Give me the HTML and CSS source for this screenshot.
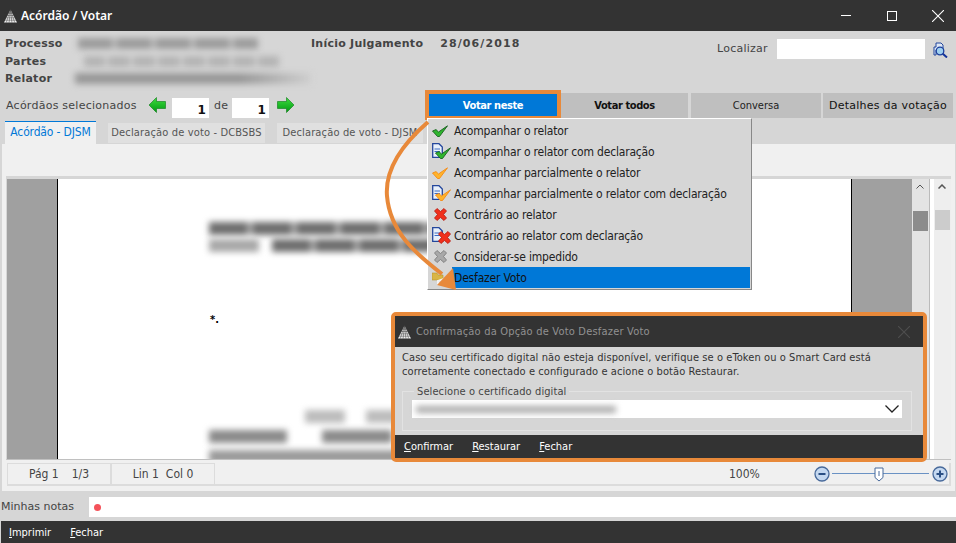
FILE: index.html
```html
<!DOCTYPE html>
<html lang="pt-BR">
<head>
	<meta charset="UTF-8">
	<title>Acórdão / Votar</title>
	<link rel="stylesheet" href="styles.css">
</head>
<body>

<!-- icones reutilizados -->
<svg class="defs" width="0" height="0">
	<defs>
		<linearGradient id="gradGreen" x1="0" y1="0" x2="0" y2="1">
			<stop offset="0" stop-color="#3fdc3f"/>
			<stop offset="1" stop-color="#009a12"/>
		</linearGradient>
	</defs>
	<symbol id="logo" viewBox="0 0 14 14">
		<polygon points="7,0 14,14 0,14" fill="#f2f2f2"/>
		<path d="M0 11.5H14M0 9H14M0 6.500H14M0 4H14M2.500 14L7 0M5.500 14L7 0M8.500 14L7 0M11.500 14L7 0" stroke="#333" stroke-width=".5" fill="none"/>
	</symbol>
	<symbol id="checkGreen" viewBox="0 0 16 12">
		<path d="M.5 6L4 4.600L6.500 7L15.500 .8L7.500 11.500H5.500Z" fill="#2fb52f" stroke="#17601f" stroke-width=".9"/>
	</symbol>
	<symbol id="checkOrange" viewBox="0 0 16 12">
		<path d="M.5 6L4 4.600L6.500 7L15.500 .8L7.500 11.500H5.500Z" fill="#ffb42b" stroke="#f58a14" stroke-width=".9"/>
	</symbol>
	<symbol id="crossRed" viewBox="0 0 13 13">
		<path d="M.5 3L3 .5L6.500 3.500L10 .5L12.500 3L9.500 6.500L12.500 10L10 12.500L6.500 9.500L3 12.500L.5 10L3.500 6.500Z" fill="#f0301c" stroke="#b51a10" stroke-width=".8"/>
	</symbol>
	<symbol id="crossGrey" viewBox="0 0 13 13">
		<path d="M.5 3L3 .5L6.500 3.500L10 .5L12.500 3L9.500 6.500L12.500 10L10 12.500L6.500 9.500L3 12.500L.5 10L3.500 6.500Z" fill="#a8a8a8" stroke="#777" stroke-width=".8"/>
	</symbol>
	<symbol id="sheet" viewBox="0 0 11 15">
		<path d="M.7.7H7L10.300 4V14.300H.7Z" fill="#e8f0fa" stroke="#23479c" stroke-width="1.300"/>
		<path d="M2.500 6H8M2.500 8.500H8" stroke="#3c6cc4"/>
	</symbol>
</svg>

<div class="titleBar">
	<svg class="logoIcon"><use href="#logo"/></svg>
	<span class="titleText">Acórdão / Votar</span>
	<div class="winBtns">
		<span class="winMin"></span>
		<span class="winMax"></span>
		<svg class="winClose" viewBox="0 0 12 12"><path d="M0 0L12 12M12 0L0 12" stroke="#fff" stroke-width="1.100"/></svg>
	</div>
</div>

<div class="infoBox">
	<div class="infoLeft">
		<div class="infoRow"><b class="infoLabel">Processo</b><span class="blurBar barA"></span></div>
		<div class="infoRow"><b class="infoLabel">Partes</b><span class="blurBar barB"></span></div>
		<div class="infoRow"><b class="infoLabel">Relator</b><span class="blurBar barC"></span></div>
	</div>
	<div class="infoDate">
		<b class="dateLabel">Início Julgamento</b><b class="dateValue">28/06/2018</b>
	</div>
	<div class="findBox">
		<span class="findLabel">Localizar</span>
		<span class="findInput"></span>
		<svg class="findIcon" viewBox="0 0 15 16">
			<path d="M1 5L3 5V1H8L10 3V8H3V13H1Z" fill="#dfe8f6" stroke="#23479c"/>
			<circle cx="7" cy="9" r="3.800" fill="#9fd0f0" stroke="#1b3f9c" stroke-width="1.300"/>
			<path d="M9.800 11.800L14 15.500" stroke="#14339a" stroke-width="2"/>
		</svg>
	</div>
</div>

<div class="selectRow">
	<span class="selLabel">Acórdãos selecionados</span>
	<svg class="navArrow arrowLeft" viewBox="0 0 17 16"><path d="M0 8L7.500 .5V4.500H16.500V11.500H7.500V15.500Z" fill="url(#gradGreen)" stroke="#0a7a16" stroke-width=".6"/></svg>
	<span class="numBox">1</span>
	<span class="ofText">de</span>
	<span class="numBox numLast">1</span>
	<svg class="navArrow arrowRight" viewBox="0 0 17 16"><path d="M17 8L9.500 .5V4.500H.5V11.500H9.500V15.500Z" fill="url(#gradGreen)" stroke="#0a7a16" stroke-width=".6"/></svg>
	<div class="actions">
		<button class="actBtn actVote">Votar neste</button>
		<button class="actBtn actAll">Votar todos</button>
		<button class="actBtn actTalk">Conversa</button>
		<button class="actBtn actInfo">Detalhes da votação</button>
	</div>
</div>

<div class="tabs">
	<span class="tab tabOn">Acórdão - DJSM</span>
	<span class="tab tabTwo">Declaração de voto - DCBSBS</span>
	<span class="tab tabThree">Declaração de voto - DJSM</span>
</div>

<div class="panel">
	<div class="docView">
		<div class="pageSide"></div>
		<div class="page">
			<span class="pageBlur blurA"></span>
			<span class="pageBlur blurB"></span>
			<span class="pageBlur blurC"></span>
			<span class="pageBlur blurD"></span>
			<span class="pageBlur blurE"></span>
			<span class="pageBlur blurF"></span>
			<span class="pageBlur blurG"></span>
			<span class="pageBlur blurH"></span>
			<b class="pageMark">*.</b>
		</div>
		<div class="pageSide pageSideR"></div>
		<div class="scroll scrollOne">
			<svg class="scrollUp" viewBox="0 0 8 5"><path d="M.5 4.500L4 1L7.500 4.500" fill="none" stroke="#555"/></svg>
			<span class="thumb thumbOne"></span>
			<svg class="scrollDown" viewBox="0 0 8 5"><path d="M.5 .5L4 4L7.500 .5" fill="none" stroke="#555" stroke-width="1.500"/></svg>
		</div>
		<div class="scroll scrollTwo">
			<svg class="scrollUp" viewBox="0 0 8 5"><path d="M.5 4.500L4 1L7.500 4.500" fill="none" stroke="#555" stroke-width="1.500"/></svg>
			<span class="thumb thumbTwo"></span>
		</div>
	</div>
	<div class="statusRow">
		<span class="statCell"><span>Pág 1</span><span>1/3</span></span>
		<span class="statCell"><span>Lin 1</span><span>Col 0</span></span>
		<span class="statZoom">100%</span>
		<div class="zoomBar">
			<svg class="zoomBtn" viewBox="0 0 16 16"><circle cx="8" cy="8" r="7" fill="#c4d8f0" stroke="#47699a" stroke-width="1.300"/><path d="M4.500 8H11.500" stroke="#2a4f84" stroke-width="2"/></svg>
			<span class="zoomLine"><svg class="zoomThumb" viewBox="0 0 10 15"><path d="M1 1H9V10.500L5 14L1 10.500Z" fill="#fff" stroke="#47699a"/><path d="M5 4V9" stroke="#47699a"/></svg></span>
			<svg class="zoomBtn" viewBox="0 0 16 16"><circle cx="8" cy="8" r="7" fill="#c4d8f0" stroke="#47699a" stroke-width="1.300"/><path d="M4.500 8H11.500M8 4.500V11.500" stroke="#2a4f84" stroke-width="2"/></svg>
		</div>
	</div>
</div>

<div class="notesRow">
	<span class="notesLabel">Minhas notas</span>
	<div class="notesInput"><span class="redDot"></span></div>
</div>

<div class="bottomBar">
	<span class="barBtn"><u>I</u>mprimir</span>
	<span class="barBtn"><u>F</u>echar</span>
</div>

<!-- menu do botao Votar neste -->
<div class="voteMenu">
	<div class="menuItem"><span class="menuIcon"><svg class="icCheck"><use href="#checkGreen"/></svg></span>Acompanhar o relator</div>
	<div class="menuItem"><span class="menuIcon"><svg class="icSheet"><use href="#sheet"/></svg><svg class="icCheck icOver"><use href="#checkGreen"/></svg></span>Acompanhar o relator com declaração</div>
	<div class="menuItem"><span class="menuIcon"><svg class="icCheck"><use href="#checkOrange"/></svg></span>Acompanhar parcialmente o relator</div>
	<div class="menuItem"><span class="menuIcon"><svg class="icSheet"><use href="#sheet"/></svg><svg class="icCheck icOver"><use href="#checkOrange"/></svg></span>Acompanhar parcialmente o relator com declaração</div>
	<div class="menuItem"><span class="menuIcon"><svg class="icCross"><use href="#crossRed"/></svg></span>Contrário ao relator</div>
	<div class="menuItem"><span class="menuIcon"><svg class="icSheet"><use href="#sheet"/></svg><svg class="icCross icOver"><use href="#crossRed"/></svg></span>Contrário ao relator com declaração</div>
	<div class="menuItem"><span class="menuIcon"><svg class="icCross"><use href="#crossGrey"/></svg></span>Considerar-se impedido</div>
	<div class="menuItem menuOn"><span class="menuIcon"><svg class="icUndo" viewBox="0 0 14 14"><path d="M0 2H5L6 4H11V9H0Z" fill="#d9b545" stroke="#b8952c" stroke-width=".6"/><path d="M6 14V10L12 8" stroke="#f3f3f3" stroke-width="2" fill="none"/></svg></span><span class="menuText">Desfazer Voto</span></div>
</div>

<!-- dialogo de confirmacao -->
<div class="dialog">
	<div class="dlgTitle">
		<svg class="logoIcon dlgLogo"><use href="#logo"/></svg>
		<span class="dlgName">Confirmação da Opção de Voto Desfazer Voto</span>
		<svg class="dlgClose" viewBox="0 0 12 12"><path d="M0 0L12 12M12 0L0 12" stroke="#4e4e4e" stroke-width="1.100"/></svg>
	</div>
	<div class="dlgBody">
		<p class="dlgText">Caso seu certificado digital não esteja disponível, verifique se o eToken ou o Smart Card está corretamente conectado e configurado e acione o botão Restaurar.</p>
		<fieldset class="dlgGroup">
			<legend class="dlgLegend">Selecione o certificado digital</legend>
			<div class="dlgSelect">
				<span class="blurBar barCert"></span>
				<svg class="dlgChevron" viewBox="0 0 14 8"><path d="M.5 .5L7 7L13.500 .5" fill="none" stroke="#222" stroke-width="1.300"/></svg>
			</div>
		</fieldset>
	</div>
	<div class="dlgBar">
		<span class="barBtn"><u>C</u>onfirmar</span>
		<span class="barBtn"><u>R</u>estaurar</span>
		<span class="barBtn"><u>F</u>echar</span>
	</div>
</div>

<!-- seta laranja por cima de tudo -->
<svg class="callout" viewBox="0 0 956 543">
	<path d="M428 122C398 148 385 172 387 196C390 232 416 254 442 274" fill="none" stroke="#e8893a" stroke-width="4"/>
	<polygon points="453,268 437,285 456,290" fill="#e8893a"/>
</svg>

</body>
</html>
```

FILE: styles.css
```css
*{
	margin: 0;
	padding: 0;
	box-sizing: border-box;
}

body{
	width: 956px;
	height: 543px;
	overflow: hidden;
	position: relative;
	background: #d6d6d6;
	font-family: "DejaVu Sans", sans-serif;
	font-stretch: condensed;
	font-size: 12px;
	color: #444;
}

.defs{
	position: absolute;
}

/* barra de titulo */
.titleBar{
	height: 31px;
	background: #333;
	color: #fff;
	display: flex;
	align-items: center;
	padding-left: 4px;
}

.logoIcon{
	width: 13px;
	height: 14px;
}

.titleText{
	margin-left: 4px;
	font-family: "Noto Sans", sans-serif;
	font-stretch: normal;
	font-size: 12px;
	font-weight: 600;
}

.winBtns{
	margin-left: auto;
	display: flex;
	align-items: center;
	padding-right: 12px;
}

.winMin{
	width: 10px;
	height: 1px;
	background: #fff;
}

.winMax{
	width: 10px;
	height: 10px;
	border: 1px solid #fff;
	margin-left: 36px;
}

.winClose{
	width: 12px;
	height: 12px;
	margin-left: 35px;
}

/* dados do processo */
.infoBox{
	height: 59px;
	display: flex;
	position: relative;
	font-stretch: normal;
	font-size: 11px;
	letter-spacing: .25px;
}

.infoLeft{
	width: 311px;
	padding: 4px 0 0 5px;
}

.infoRow{
	height: 17.500px;
	display: flex;
	align-items: center;
}

.infoLabel{
	width: 71px;
}

.blurBar{
	display: block;
	height: 11px;
	background: repeating-linear-gradient(90deg, #9c9c9c 0 34px, #bcbcbc 34px 39px);
	filter: blur(3px);
}

.barA{
	width: 180px;
	margin-left: 2px;
}

.barB{
	width: 195px;
	margin-left: 8px;
	background: repeating-linear-gradient(90deg, #b4b4b4 0 20px, #c8c8c8 20px 25px);
}

.barC{
	width: 250px;
	margin-left: 3px;
	background: linear-gradient(to right, #989898 70%, #cfcfcf);
}

.infoDate{
	width: 406px;
	padding-top: 6px;
}

.dateLabel{
	margin-right: 17px;
}

.dateValue{
	letter-spacing: 1.100px;
}

.findBox{
	display: flex;
	align-items: flex-start;
	padding-top: 8px;
}

.findLabel{
	width: 60px;
	padding-top: 3px;
}

.findInput{
	width: 148px;
	height: 20px;
	background: #fff;
}

.findIcon{
	width: 15px;
	height: 16px;
	margin: 3px 0 0 8px;
}

/* linha de selecao e botoes */
.selectRow{
	height: 30px;
	display: flex;
	align-items: center;
	position: relative;
	font-stretch: normal;
	font-size: 11px;
	letter-spacing: .25px;
	padding-left: 6px;
}

.selLabel{
	width: 143px;
}

.navArrow{
	width: 17px;
	height: 16px;
}

.numBox{
	width: 37px;
	height: 26px;
	border-top: 6px solid #d6d6d6;
	background: #fff;
	margin-left: 6px;
	text-align: right;
	padding: 5px 3px 0 0;
	font-size: 12px;
	font-weight: bold;
	color: #111;
}

.ofText{
	width: 18px;
	margin-left: 5px;
}

.numLast{
	margin-left: 0;
}

.arrowRight{
	margin-left: 8px;
}

.actions{
	margin-left: auto;
	margin-right: 3px;
	display: flex;
	height: 30px;
	align-items: center;
}

.actBtn{
	height: 25px;
	background: #bfbfbf;
	border: 0;
	color: #222;
	font-family: "DejaVu Sans", sans-serif;
	font-stretch: condensed;
	font-size: 11px;
}

.actVote{
	width: 128px;
	height: 22px;
	background: #0078d7;
	color: #fff;
	font-weight: 700;
	letter-spacing: -.4px;
	outline: 4px solid #e8893a;
	margin-right: 4px;
}

.actAll{
	width: 127px;
	font-weight: 700;
	letter-spacing: -.4px;
	color: #111;
}

.actTalk{
	width: 130px;
	margin-left: 3px;
}

.actInfo{
	width: 130px;
	margin-left: 2px;
	font-stretch: normal;
	letter-spacing: .25px;
	color: #111;
}

/* abas */
.tabs{
	height: 23px;
	margin-top: 1px;
	padding-left: 5px;
	display: flex;
	align-items: flex-end;
}

.tab{
	height: 20px;
	line-height: 19px;
	background: #e0e0e0;
	color: #555;
	font-size: 11px;
	letter-spacing: .15px;
	text-align: center;
	white-space: nowrap;
	margin-bottom: 1px;
}

.tabOn{
	width: 91px;
	height: 23px;
	line-height: 21px;
	margin-bottom: 0;
	background: #f0f0f0;
	border-top: 1px solid #0078d7;
	color: #0078d7;
	font-size: 12px;
	letter-spacing: -.15px;
}

.tabTwo{
	width: 157px;
	margin-left: 12px;
}

.tabThree{
	width: 146px;
	margin-left: 12px;
}

/* painel do documento */
.panel{
	height: 347px;
	width: 953px;
	margin-left: 2px;
	background: #f0f0f0;
	padding: 32px 4px 0;
}

.docView{
	height: 284px;
	border-top: 3px solid #d6d6d6;
	border-left: 1px solid #d6d6d6;
	border-bottom: 1px solid #c0c0c0;
	display: flex;
	background: #fff;
}

.pageSide{
	width: 50px;
	background: #a0a0a0;
}

.pageSideR{
	width: 60px;
}

.page{
	width: 796px;
	background: #fff;
	border-left: 1px solid #000;
	border-right: 1px solid #000;
	position: relative;
	overflow: hidden;
}

.pageBlur{
	position: absolute;
	height: 13px;
	background: repeating-linear-gradient(90deg, #6e6e6e 0 38px, #a8a8a8 38px 44px);
	filter: blur(3px);
}

.blurA{ left: 151px; top: 43px; width: 300px; }
.blurB{ left: 151px; top: 60px; width: 50px; background: #a8a8a8; }
.blurC{ left: 214px; top: 60px; width: 240px; }
.blurD{ left: 247px; top: 231px; width: 40px; background: #bcbcbc; }
.blurE{ left: 308px; top: 231px; width: 40px; background: #bcbcbc; }
.blurF{ left: 151px; top: 251px; width: 78px; background: #8a8a8a; }
.blurG{ left: 264px; top: 251px; width: 70px; background: #8a8a8a; }
.blurH{ left: 151px; top: 271px; width: 200px; background: #9a9a9a; }

.pageMark{
	position: absolute;
	left: 152px;
	top: 134px;
	color: #000;
	font-size: 11px;
	line-height: 14px;
}

.scroll{
	position: relative;
	background: #e4e4e4;
	width: 17px;
}

.scrollOne{
	border-right: 1px solid #bbb;
	width: 18px;
}

.scrollTwo{
	margin-left: 4px;
	background: #eee;
}

.scrollUp{
	position: absolute;
	top: 5px;
	left: 4px;
	width: 8px;
	height: 5px;
}

.scrollDown{
	position: absolute;
	bottom: 5px;
	left: 4px;
	width: 8px;
	height: 5px;
}

.thumb{
	position: absolute;
	top: 32px;
	left: 1px;
	width: 15px;
	height: 20px;
}

.thumbOne{
	background: #8c8c8c;
}

.thumbTwo{
	background: #ccc;
	top: 31px;
}

/* barra de status */
.statusRow{
	height: 23px;
	margin: 3px 0 0 1px;
	border: 2px solid #dcdcdc;
	border-left: 0;
	border-top: 0;
	display: flex;
	align-items: center;
	color: #444;
}

.statCell{
	width: 104px;
	height: 22px;
	border: 1px solid #dcdcdc;
	display: flex;
	justify-content: center;
	align-items: center;
	gap: 13px;
}

.statCell + .statCell{
	gap: 7px;
}

.statZoom{
	margin-left: 514px;
	width: 85px;
}

.zoomBar{
	display: flex;
	align-items: center;
}

.zoomBtn{
	width: 16px;
	height: 16px;
}

.zoomLine{
	width: 97px;
	height: 1px;
	background: #6a92c4;
	margin: 0 3px 0 2px;
	position: relative;
}

.zoomThumb{
	position: absolute;
	left: 42px;
	top: -6px;
	width: 10px;
	height: 15px;
}

/* notas */
.notesRow{
	height: 28px;
	display: flex;
	align-items: center;
	padding: 3px 0 0 1px;
}

.notesLabel{
	width: 88px;
	font-stretch: normal;
	font-size: 11px;
}

.notesInput{
	flex: 1;
	height: 20px;
	background: #fff;
	padding: 7px 0 0 5px;
}

.redDot{
	display: block;
	width: 7px;
	height: 7px;
	border-radius: 50%;
	background: #f4525a;
}

.bottomBar{
	height: 22px;
	margin: 2px 0 0 1px;
	background: #333;
	display: flex;
	align-items: center;
	padding-left: 8px;
	gap: 19px;
}

.barBtn{
	color: #fff;
	font-size: 11px;
}

/* menu */
.voteMenu{
	position: absolute;
	left: 427px;
	top: 118px;
	width: 325px;
	height: 172px;
	background: #d6d6d6;
	border-top: 1px solid #fff;
	border-left: 1px solid #fff;
	border-right: 1px solid #888;
	border-bottom: 1px solid #888;
	padding: 1px 1px 0 0;
	color: #222;
	letter-spacing: -.18px;
}

.menuItem{
	height: 21px;
	display: flex;
	align-items: center;
	padding: 1px 0 0 26px;
	position: relative;
}

.menuIcon{
	position: absolute;
	left: 4px;
	top: 2px;
	width: 18px;
	height: 17px;
}

.menuIcon svg{
	position: absolute;
	left: 0;
}

.icCheck{
	width: 16px;
	height: 12px;
	top: 3px;
}

.icCross{
	width: 13px;
	height: 13px;
	top: 2px;
	left: 2px !important;
}

.icSheet{
	width: 11px;
	height: 15px;
	top: 0;
}

.icOver{
	left: 3px !important;
	top: 4px;
}

.icCross.icOver{
	left: 6px !important;
}

.icUndo{
	width: 14px;
	height: 14px;
	top: 2px;
}

.menuText{
	margin: -1px 0 0 -2px;
	padding-left: 2px;
	flex: 1;
	background: #0078d7;
	height: 21px;
	line-height: 22px;
	color: #111;
}

/* dialogo */
.dialog{
	position: absolute;
	left: 391px;
	top: 312px;
	width: 536px;
	height: 150px;
	background: #d6d6d6;
	border: 4px solid #e8893a;
	border-radius: 5px;
	display: flex;
	flex-direction: column;
}

.dlgTitle{
	height: 31px;
	background: #333;
	display: flex;
	align-items: center;
	padding: 0 13px 0 3px;
	flex: none;
}

.dlgName{
	margin-left: 5px;
	color: #919191;
	font-size: 11px;
	letter-spacing: .2px;
}

.dlgClose{
	margin-left: auto;
	width: 12px;
	height: 12px;
}

.dlgBody{
	flex: 1;
	padding: 4px 11px 0 7px;
}

.dlgText{
	line-height: 14px;
	font-size: 11px;
	letter-spacing: .08px;
	color: #333;
}

.dlgGroup{
	height: 46px;
	margin-top: 6px;
	border: 1px solid #e2e2e2;
	padding: 0 9px;
}

.dlgLegend{
	margin-left: 2px;
	padding: 0 3px;
	line-height: 13px;
	font-size: 11px;
	letter-spacing: .1px;
	color: #444;
}

.dlgSelect{
	height: 18px;
	margin-top: 2px;
	background: #fff;
	display: flex;
	align-items: center;
	padding: 0 3px 0 4px;
}

.barCert{
	width: 200px;
	height: 7px;
	background: #aaa;
}

.dlgChevron{
	margin-left: auto;
	width: 14px;
	height: 8px;
}

.dlgBar{
	height: 23px;
	background: #333;
	display: flex;
	align-items: center;
	padding-left: 9px;
	gap: 19px;
	flex: none;
}

.callout{
	position: absolute;
	left: 0;
	top: 0;
	width: 956px;
	height: 543px;
	pointer-events: none;
}
```
